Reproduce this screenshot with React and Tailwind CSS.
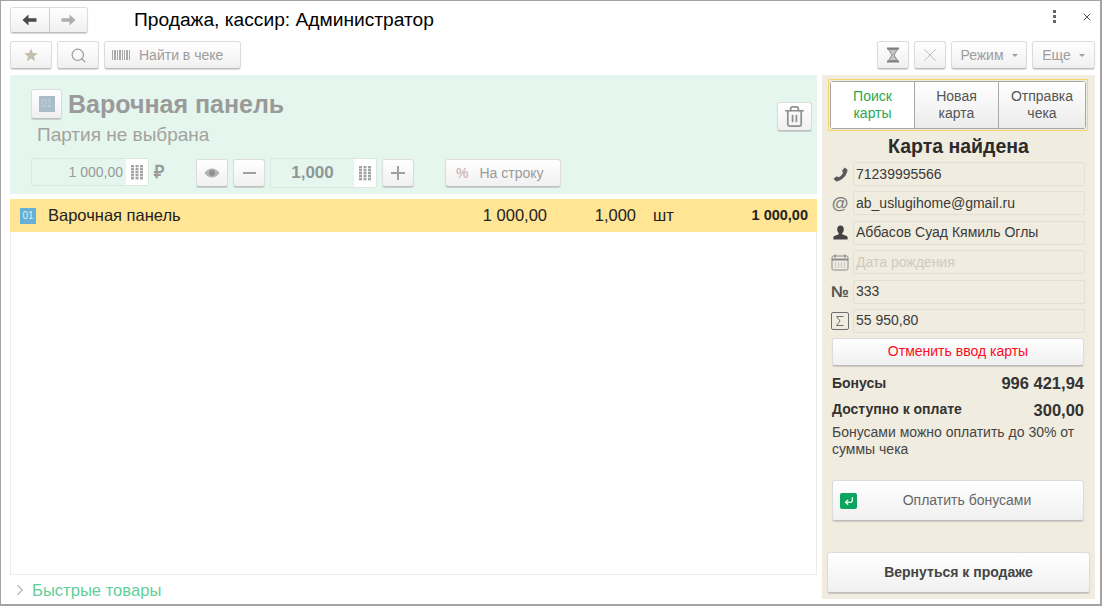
import { Search, Trash2, X, ChevronRight, CornerDownLeft } from "lucide-react";

const btn = "flex items-center justify-center rounded-[3px] border border-[#dcdcdc] border-b-[#bdbdbd] bg-gradient-to-b from-white to-[#f0f0f0] shadow-[0_1px_1px_rgba(0,0,0,0.15)]";

const Barcode = () => (
  <svg width="18" height="12" viewBox="0 0 18 12" fill="#a8a8a8">
    <rect x="0" y="1" width="1" height="10" />
    <rect x="2" y="1" width="2" height="10" />
    <rect x="5" y="1" width="1" height="10" />
    <rect x="7" y="1" width="2" height="10" />
    <rect x="10" y="1" width="1" height="10" />
    <rect x="12" y="1" width="1" height="10" />
    <rect x="14" y="1" width="2" height="10" />
    <rect x="17" y="1" width="1" height="10" />
  </svg>
);

const Keypad = ({ color = "#a3a3a3" }) => (
  <svg width="12" height="15" viewBox="0 0 12 15" fill={color}>
    {[0, 3, 6, 9, 12].map((y) =>
      [0, 4.5, 9].map((x) => <rect key={x + "-" + y} x={x} y={y} width="3" height="2.4" />)
    )}
  </svg>
);

const Arrow = ({ color, flip }) => (
  <svg width="15" height="12" viewBox="0 0 15 12" fill={color} className={flip ? "-scale-x-100" : ""}>
    <path d="M6.5 0.5 L0.5 6 L6.5 11.5 L6.5 7.8 L14.5 7.8 L14.5 4.2 L6.5 4.2 Z" />
  </svg>
);

const StarIcon = () => (
  <svg width="14" height="14" viewBox="0 0 14 14" fill="#c4bdb0">
    <path d="M7 0.5 L8.9 5 L13.7 5.3 L10 8.4 L11.2 13.2 L7 10.6 L2.8 13.2 L4 8.4 L0.3 5.3 L5.1 5 Z" />
  </svg>
);

const HourglassIcon = () => (
  <svg width="14" height="16" viewBox="0 0 14 16">
    <path d="M1 0.5h12v2H1zM1 13.5h12v2H1z" fill="#7f7f7f" />
    <path d="M2.5 2.5h9L8 8l3.5 5.5h-9L6 8z" fill="#c4c4c4" stroke="#8c8c8c" />
  </svg>
);

const EyeIcon = () => (
  <svg width="16" height="10" viewBox="0 0 16 10">
    <path d="M0.5 5C3 1.5 5.5 0.5 8 0.5s5 1 7.5 4.5C13 8.5 10.5 9.5 8 9.5S3 8.5 0.5 5z" fill="#b3b3b3" />
    <circle cx="8" cy="5" r="3" fill="#8f8f8f" />
  </svg>
);

const PhoneIcon = () => (
  <svg width="15" height="15" viewBox="0 0 16 16" fill="#5a5a5a">
    <path d="M12.5 0.5 L15.5 3 C15 9 10 14.5 3.5 15.5 L0.5 12.5 L4 9.8 L6 11 C8 10 9.8 8 10.6 6 L9.6 4 Z" />
  </svg>
);

const PersonIcon = () => (
  <svg width="15" height="15" viewBox="0 0 15 15" fill="#444">
    <path d="M7.5 0.5C9.6 0.5 10.8 2 10.8 4.2C10.8 6 10 7.4 9.2 8.2V9.2L13.6 11C14.4 11.4 14.6 12 14.6 12.8V14.5H0.4V12.8C0.4 12 0.6 11.4 1.4 11L5.8 9.2V8.2C5 7.4 4.2 6 4.2 4.2C4.2 2 5.4 0.5 7.5 0.5Z" />
  </svg>
);

const Code01 = ({ faded }) => (
  <div className={`flex h-[16px] w-[16px] items-center justify-center text-[10px] leading-none ${faded ? "bg-[#a9bcc8] text-[#c5d2da]" : "bg-[#66b0d6] text-[#dcecf5]"}`}>
    01
  </div>
);

const Calendar = () => (
  <svg width="18" height="18" viewBox="0 0 18 18" fill="none" stroke="#8a8a8a">
    <rect x="1" y="3" width="16" height="14" rx="1.5" />
    <path d="M1 6.5h16" strokeWidth="2" />
    <path d="M4 1.5v3M14 1.5v3" strokeWidth="1.5" />
    <path d="M4.5 9v6M7.5 9v6M10.5 9v6M13.5 9v6" stroke="#c4c4c4" />
  </svg>
);

const Sigma = () => (
  <svg width="18" height="18" viewBox="0 0 18 18" fill="none" stroke="#6f6f6f">
    <rect x="0.5" y="0.5" width="17" height="17" rx="1.5" />
    <path d="M12.5 4.5H5.5l3.6 4.5-3.6 4.5h7" />
  </svg>
);

const Field = ({ icon, value, placeholder }) => (
  <div className="flex h-[24px] items-center">
    <div className="flex w-[26px] shrink-0 items-center justify-center">{icon}</div>
    <div className={`flex h-[24px] w-[232px] items-center rounded-[2px] border border-[#e4dfd2] pl-[2px] text-[14px] ${placeholder ? "text-[#cfcabf]" : "text-[#3a3a3a]"}`}>
      {value || placeholder}
    </div>
  </div>
);

export default function App() {
  return (
    <div className="flex h-[606px] w-[1102px] flex-col overflow-hidden border border-b-2 border-r-2 border-[#a3a3a3] bg-white font-['Liberation_Sans',sans-serif]">
      {/* title */}
      <div className="flex h-[40px] shrink-0 items-start pl-[9px] pr-[7px] pt-[6px]">
        <div className={`${btn} h-[26px] w-[78px] border-[#c8c8c8]`}>
          <div className="flex h-full flex-1 items-center justify-center border-r border-[#d0d0d0]">
            <Arrow color="#4a4a4a" />
          </div>
          <div className="flex h-full flex-1 items-center justify-center">
            <Arrow color="#adadad" flip />
          </div>
        </div>
        <div className="ml-[46px] text-[19.2px] leading-[26px] text-black">Продажа, кассир: Администратор</div>
        <div className="ml-auto flex items-center gap-[25px] pt-[3px]">
          <div className="flex flex-col gap-[2px]">
            <span className="h-[3px] w-[3px] bg-[#666]"></span>
            <span className="h-[3px] w-[3px] bg-[#666]"></span>
            <span className="h-[3px] w-[3px] bg-[#666]"></span>
          </div>
          <X size={12} strokeWidth={2} color="#555" />
        </div>
      </div>

      {/* toolbar */}
      <div className="flex h-[29px] shrink-0 items-start pl-[9px] pr-[5px] text-[14px] text-[#9d9d9d]">
        <div className={`${btn} h-[28px] w-[42px]`}><StarIcon /></div>
        <div className={`${btn} ml-[5px] h-[28px] w-[42px]`}><Search size={17} color="#999" strokeWidth={1.6} /></div>
        <div className={`${btn} ml-[5px] h-[28px] w-[137px] !justify-start pl-[7px]`}>
          <Barcode />
          <span className="ml-[9px]">Найти в чеке</span>
        </div>
        <div className={`${btn} ml-auto h-[28px] w-[32px]`}><HourglassIcon /></div>
        <div className={`${btn} ml-[5px] h-[28px] w-[32px]`}><X size={22} strokeWidth={1} color="#c9b4b4" /></div>
        <div className={`${btn} ml-[5px] h-[28px] w-[76px] gap-[8px]`}>
          <span>Режим</span>
          <span className="mt-[1px] border-x-[3px] border-t-[3px] border-x-transparent border-t-[#9d9d9d]"></span>
        </div>
        <div className={`${btn} ml-[5px] h-[28px] w-[63px] gap-[8px]`}>
          <span>Еще</span>
          <span className="mt-[1px] border-x-[3px] border-t-[3px] border-x-transparent border-t-[#9d9d9d]"></span>
        </div>
      </div>

      {/* body */}
      <div className="mt-[5px] flex min-h-0 flex-1 pl-[9px] pr-[5px]">
        <div className="flex w-[807px] flex-col">
          {/* product panel */}
          <div className="relative h-[119px] shrink-0 bg-[#e5f6ee] pl-[21px] pt-[14px]">
            <div className="flex h-[30px] items-center">
              <div className={`${btn} h-[30px] w-[31px]`}><Code01 faded /></div>
              <div className="ml-[6px] text-[25px] font-bold leading-[30px] text-[#9a9a9a]">Варочная панель</div>
            </div>
            <div className="ml-[6px] mt-[3px] text-[19px] leading-[26px] text-[#a3a39d]">Партия не выбрана</div>
            <div className="mt-[10px] flex items-start text-[#9a9a9a]">
              <div className="flex h-[28px] w-[118px] items-center rounded-[2px] border border-[#d9e9e0]">
                <span className="flex-1 pr-[3px] text-right text-[14px]">1 000,00</span>
                <div className="flex h-full w-[22px] items-center justify-center bg-white"><Keypad /></div>
              </div>
              <span className="ml-[5px] mt-[3px] w-[17px] text-[18px] font-bold leading-[22px]">₽</span>
              <div className={`${btn} ml-[25px] mt-[1px] h-[28px] w-[32px]`}><EyeIcon /></div>
              <div className={`${btn} ml-[5px] mt-[1px] h-[28px] w-[32px]`}>
                <span className="h-[2px] w-[13px] bg-[#a0a0a0]"></span>
              </div>
              <div className="ml-[5px] flex h-[30px] w-[107px] items-center rounded-[2px] border border-[#d9e9e0]">
                <span className="flex-1 text-center text-[17px] font-bold text-[#8f9796]">1,000</span>
                <div className="flex h-full w-[22px] items-center justify-center bg-white"><Keypad /></div>
              </div>
              <div className={`${btn} ml-[5px] mt-[1px] h-[28px] w-[32px] text-[#a0a0a0]`}>
                <span className="relative block h-[2px] w-[14px] bg-[#a0a0a0]">
                  <span className="absolute left-[6px] top-[-6px] block h-[14px] w-[2px] bg-[#a0a0a0]"></span>
                </span>
              </div>
              <div className={`${btn} ml-[31px] mt-[1px] h-[28px] w-[116px] !justify-start pl-[10px] text-[14px]`}>
                <span className="font-bold text-[#d5bcbc]">%</span>
                <span className="ml-[11px]">На строку</span>
              </div>
            </div>
            <div className={`${btn} absolute right-[5px] top-[27px] h-[29px] w-[35px]`}><Trash2 size={23} color="#8f8f8f" strokeWidth={1.8} /></div>
          </div>

          {/* table */}
          <div className="mt-[5px] flex h-[376px] shrink-0 flex-col border-x border-b border-[#ebebeb]">
            <div className="-mx-[1px] flex h-[33px] items-center bg-[#ffe594] pl-[10px] text-[#222]">
              <Code01 />
              <span className="ml-[12px] w-[416px] text-[16.5px] leading-none">Варочная панель</span>
              <span className="w-[83px] text-right text-[16.5px]">1 000,00</span>
              <span className="w-[89px] text-right text-[16.5px]">1,000</span>
              <span className="ml-[17px] w-[40px] text-[16.5px]">шт</span>
              <span className="flex-1 pr-[9px] text-right text-[14.5px] font-bold">1 000,00</span>
            </div>
          </div>

          <div className="flex flex-1 items-start pl-[1px] pt-[6px] text-[#62cf99]">
            <ChevronRight size={18} color="#b5b5b5" strokeWidth={1.5} />
            <span className="ml-[3px] text-[16.6px] leading-[19px]">Быстрые товары</span>
          </div>
        </div>

        {/* right panel */}
        <div className="ml-[5px] mb-[5px] flex w-[273px] flex-col bg-[#f1ece0] pl-[5px] pr-[5px] pt-[4px]">
          <div className="mx-[1px] flex h-[52px] w-[260px] shrink-0 rounded-[1px] border border-[#f5d469] p-[1px] text-[14px] leading-[17px]">
            <div className="flex h-full w-full rounded-[3px] border border-[#a8a8a8] text-center">
              <div className="flex w-[83px] items-center justify-center bg-white text-[#2aa84f]">Поиск<br />карты</div>
              <div className="flex w-[84px] items-center justify-center border-l border-[#a8a8a8] bg-gradient-to-b from-white to-[#ececec] text-[#555]">Новая<br />карта</div>
              <div className="flex flex-1 items-center justify-center border-l border-[#a8a8a8] bg-gradient-to-b from-white to-[#ececec] text-[#555]">Отправка<br />чека</div>
            </div>
          </div>

          <div className="mt-[3px] text-center text-[19.5px] font-bold leading-[24px] text-[#2b2b2b]">Карта найдена</div>

          <div className="mt-[4px] flex flex-col gap-[5.4px]">
            <Field icon={<PhoneIcon />} value="71239995566" />
            <Field icon={<span className="text-[17px] font-bold leading-none text-[#7d7d7d]">@</span>} value="ab_uslugihome@gmail.ru" />
            <Field icon={<PersonIcon />} value="Аббасов Суад Кямиль Оглы" />
            <Field icon={<Calendar />} placeholder="Дата рождения" />
            <Field icon={<span className="text-[16px] font-bold leading-none text-[#555]">№</span>} value="333" />
            <Field icon={<Sigma />} value="55 950,80" />
          </div>

          <div className={`${btn} ml-[5px] mt-[5px] h-[28px] w-[252px] border-b-[#a8a8a8] text-[14px] text-[#fb0d1b]`}>Отменить ввод карты</div>

          <div className="ml-[5px] mr-[6px] mt-[7px] flex h-[20px] items-center justify-between font-bold text-[#333]">
            <span className="pt-[1px] text-[14px]">Бонусы</span>
            <span className="text-[16.5px]">996 421,94</span>
          </div>
          <div className="ml-[5px] mr-[6px] mt-[7px] flex h-[20px] items-center justify-between font-bold text-[#333]">
            <span className="text-[14px]">Доступно к оплате</span>
            <span className="text-[16.5px]">300,00</span>
          </div>
          <div className="ml-[5px] mt-[4px] w-[252px] text-[14px] leading-[17px] text-[#444]">Бонусами можно оплатить до 30% от суммы чека</div>

          <div className={`${btn} relative ml-[5px] mt-[22px] h-[41px] w-[252px] border-b-[#a8a8a8] text-[14px] text-[#666]`}>
            <div className="absolute left-[7px] top-[12px] flex h-[16px] w-[17px] items-center justify-center rounded-[2px] bg-[#0ba55e]">
              <CornerDownLeft size={10} color="white" strokeWidth={3} />
            </div>
            <span className="ml-[18px]">Оплатить бонусами</span>
          </div>

          <div className={`${btn} mt-[31px] h-[41px] w-[263px] border-b-[#a8a8a8] text-[14px] font-bold text-[#444]`}>Вернуться к продаже</div>
        </div>
      </div>
    </div>
  );
}
